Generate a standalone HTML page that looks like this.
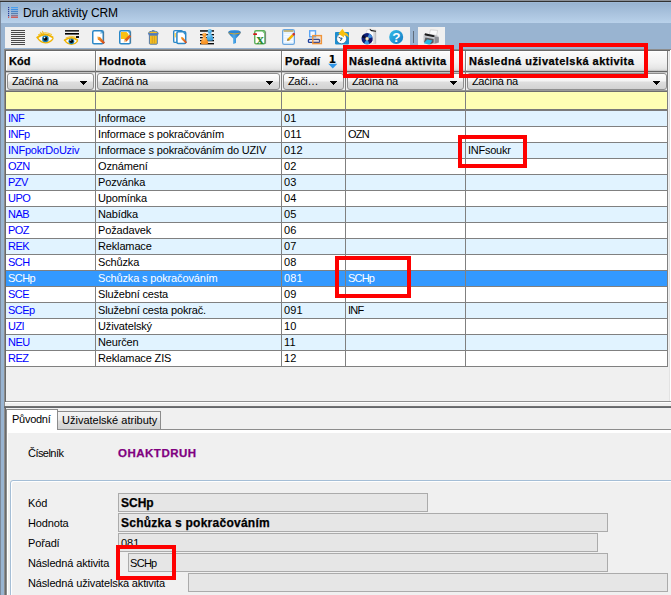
<!DOCTYPE html><html lang="cs"><head><meta charset="utf-8"><title>Druh aktivity CRM</title><style>
*{box-sizing:border-box;margin:0;padding:0}
html,body{width:671px;height:595px;overflow:hidden}
body{position:relative;background:#99b4d1;font-family:"Liberation Sans",sans-serif;font-size:11px;color:#000;line-height:1}
.a{position:absolute}
.t{position:absolute;white-space:pre;line-height:13px;height:13px}
.b{font-weight:bold;letter-spacing:.46px;-webkit-text-stroke:.25px currentColor}
.hdr{position:absolute;top:51px;height:20px;background:linear-gradient(#fbfbfb 0,#f1f1f1 55%,#e6e6e6 85%,#d4d4d4 100%);border-left:1px solid #fff;border-top:1px solid #fff}
.flt{position:absolute;top:73px;height:17px;border:1px solid #8e8e8e;border-radius:3px;background:linear-gradient(#ffffff 0,#f4f4f4 45%,#dedede 55%,#d2d2d2 100%)}
.flt i{position:absolute;right:9px;top:7px;width:1px;height:1px;background:#000;box-shadow:-3px 0 #000,-2px 0 #000,-1px 0 #000,1px 0 #000,2px 0 #000,3px 0 #000,-2px 1px #000,-1px 1px #000,0 1px #000,1px 1px #000,2px 1px #000,-1px 2px #000,0 2px #000,1px 2px #000,0 3px #000}
.vl{position:absolute;width:1px;background:#808080}
.hl{position:absolute;height:1px;background:#808080}
.row{position:absolute;left:6px;width:661px;height:15px}
.c{position:absolute;top:0;height:15px;line-height:15px;padding-left:2px;white-space:pre;overflow:hidden}
.red{position:absolute;border:4px solid #fe0000}
.fld{position:absolute;height:19px;background:#e6e6e6;border:1px solid #ababab}
.lbl{position:absolute;left:28px;white-space:pre;line-height:13px}
svg{position:absolute;overflow:visible}
</style></head><body>
<div class="a" style="left:0;top:0;width:671px;height:1px;background:#8c9097"></div>
<div class="a" style="left:0;top:1px;width:671px;height:1px;background:#323232"></div>
<div class="a" style="left:0;top:2px;width:671px;height:21px;background:linear-gradient(#a3bddb 0,#99b4d1 6%,#b9d1ea 100%)"></div>
<div class="a" style="left:0;top:2px;width:1px;height:593px;background:#7c899b"></div>
<svg style="left:8px;top:7px" width="11" height="11" viewBox="0 0 11 11"><g fill="#2a3f9a"><rect x="0" y="0" width="1.2" height="1.2"/><rect x="0" y="2" width="1.2" height="1.2"/><rect x="0" y="4" width="1.2" height="1.2"/><rect x="0" y="6" width="1.2" height="1.2"/><rect x="0" y="8" width="1.2" height="1.2"/></g><rect x="3" y="0" width="7" height="1.2" fill="#4aa0f0"/><rect x="3" y="2" width="7" height="1.2" fill="#3d8fe6"/><rect x="3" y="4" width="7" height="1.2" fill="#4a86c8"/><rect x="3" y="6" width="7" height="1.2" fill="#5a7fae"/><rect x="3" y="8" width="7" height="1.2" fill="#8a7a96"/><rect x="0" y="9.6" width="1.2" height="1.2" fill="#d2453c"/><rect x="3" y="9.6" width="7" height="1.2" fill="#d2453c"/></svg>
<div class="t" style="left:23px;top:6px;font-size:12px;line-height:14px;height:14px;letter-spacing:-.1px">Druh aktivity CRM</div>
<div class="a" style="left:5px;top:27px;width:405px;height:21px;background:#f0f0f0"></div>
<div class="a" style="left:418px;top:27px;width:27px;height:21px;background:#f0f0f0"></div>
<div class="a" style="left:413px;top:31px;width:1px;height:12px;background:#5f6b7a"></div>
<svg style="left:0;top:24px" width="460" height="26" viewBox="0 24 460 26">
<defs>
<linearGradient id="gp" x1="0" y1="0" x2="1" y2="1"><stop offset="0" stop-color="#f6d070"/><stop offset=".25" stop-color="#f08a20"/><stop offset=".8" stop-color="#d8501a"/><stop offset="1" stop-color="#7a3a2a"/></linearGradient>
<linearGradient id="gh" x1="0" y1="0" x2="1" y2="1"><stop offset="0" stop-color="#35bde8"/><stop offset="1" stop-color="#1479c4"/></linearGradient>
<linearGradient id="gf" x1="0" y1="0" x2="1" y2="0"><stop offset="0" stop-color="#1d6fc0"/><stop offset=".45" stop-color="#4aa8ea"/><stop offset="1" stop-color="#1a62b0"/></linearGradient>
<radialGradient id="gb" cx=".4" cy=".3" r=".8"><stop offset="0" stop-color="#8fd0f4"/><stop offset=".5" stop-color="#4eb0e6"/><stop offset="1" stop-color="#3a9ad8"/></radialGradient>
<radialGradient id="go" cx=".4" cy=".3" r=".8"><stop offset="0" stop-color="#ffc27a"/><stop offset=".5" stop-color="#fb9a2c"/><stop offset="1" stop-color="#f08a1c"/></radialGradient>
</defs>
<!-- 1 list -->
<g fill="#4a4a4a"><rect x="11" y="30" width="14" height="1"/><rect x="11" y="32" width="14" height="1"/><rect x="11" y="34" width="14" height="1"/><rect x="11" y="36" width="14" height="1"/><rect x="11" y="38" width="14" height="1"/><rect x="11" y="40" width="14" height="1"/><rect x="11" y="42" width="14" height="1"/><rect x="11" y="44" width="14" height="1"/></g>
<!-- 2 eye -->
<g fill="none" stroke-linecap="round">
<path d="M39 38.6Q45 34.6 52 38.6Q46 43 39 38.6Z" fill="#fff" stroke="none"/>
<path d="M38.5 34.8Q45 30.8 51.5 34.5" stroke="#f4c63a" stroke-width="1.1"/>
<path d="M37.3 37.4Q44.5 31.8 52.6 37.2" stroke="#f0b400" stroke-width="1.9"/>
<path d="M37.4 37.6Q40 42.4 45.5 42.8Q50.5 42.6 53 38.6" stroke="#f0b400" stroke-width="1.3"/>
<path d="M40.5 32.2L42 34.6M42.5 31.2L43.5 34" stroke="#f0b400" stroke-width=".8"/>
</g>
<circle cx="45.4" cy="38.9" r="3.3" fill="#1d7fae"/><circle cx="45.4" cy="38.8" r="2" fill="#050505"/><circle cx="44.6" cy="37.6" r=".8" fill="#fff"/>
<!-- 3 eye + lines -->
<rect x="65" y="30" width="14" height="1.7" fill="#2a2a2a"/><rect x="65" y="33" width="14" height="1.6" fill="#000"/><rect x="76" y="36" width="3" height="2" fill="#111"/>
<g fill="none" stroke-linecap="round">
<path d="M66 41Q71 37.8 77 41Q72 44.8 66 41Z" fill="#fff" stroke="none"/>
<path d="M66 37.8Q71 35 75.5 37" stroke="#f4c63a" stroke-width="1"/>
<path d="M64.6 40.2Q71 35.6 77.4 40" stroke="#f0b400" stroke-width="1.7"/>
<path d="M64.8 40.4Q67 44 71.5 44.4Q75.5 44.2 77.6 41" stroke="#f0b400" stroke-width="1.2"/>
</g>
<circle cx="71.4" cy="41.3" r="2.9" fill="#1d7fae"/><circle cx="71.4" cy="41.2" r="1.8" fill="#050505"/><circle cx="70.7" cy="40.1" r=".7" fill="#fff"/>
<!-- 4 new doc + pencil -->
<rect x="92.75" y="30.75" width="10.5" height="13.1" rx="1.4" fill="#fff" stroke="#2a88c8" stroke-width="1.5"/>
<path d="M100 31.2h2.8v2.8z" fill="#2e8ecb"/><path d="M100 31.2v2.8h2.8z" fill="#bfe0f4"/>
<rect x="103.4" y="31.5" width=".8" height="12" fill="#6a6a6a" opacity=".6"/>
<path d="M97.2 36.4L100 37L105 42.4L103.4 44.1L97.8 39.2Z" fill="url(#gp)"/>
<!-- 5 yellow doc + pencil -->
<rect x="119.75" y="30.75" width="10.5" height="13.1" rx="1.4" fill="#fff" stroke="#2a88c8" stroke-width="1.5"/>
<path d="M121 32h5.5l2 2v5H121z" fill="#f9c013"/>
<path d="M127.6 31.4h2v2z" fill="#2e8ecb"/>
<rect x="130.4" y="31.5" width=".8" height="12" fill="#6a6a6a" opacity=".6"/>
<path d="M123.8 42.2L124.6 39.4L129.4 34.8L131.2 36.6L126.6 41.4Z" fill="#e0601c"/><path d="M123.8 42.2L124.6 39.4L126.6 41.4Z" fill="#f2d9a0"/>
<!-- 6 trash -->
<path d="M152 30.2h2.4v1.2H152z" fill="#4a74b4"/>
<path d="M148.4 33.6Q148.4 31.2 153.3 31.2Q158.2 31.2 158.2 33.6Z" fill="#f8c020" stroke="#3f6fb0" stroke-width=".9"/>
<rect x="148.4" y="33.6" width="9.8" height="1.6" fill="#5a7ec0"/>
<path d="M149.4 35.2h7.9v8.2q0 .8-.8.8h-6.3q-.8 0-.8-.8z" fill="#f8c020" stroke="#3f6fb0" stroke-width=".9"/>
<rect x="151.6" y="36" width="1.3" height="7.2" fill="#d9a520"/><rect x="153.8" y="36" width="1.3" height="7.2" fill="#d9a520"/>
<!-- 7 copy docs + pencil -->
<rect x="173.7" y="30.6" width="8.8" height="11.8" rx="1.2" fill="#fff" stroke="#2a88c8" stroke-width="1.4"/>
<rect x="174.6" y="33" width="1.2" height="4.4" fill="#f9c83a"/>
<rect x="176.9" y="31.7" width="8.8" height="11.8" rx="1.2" fill="#fff" stroke="#2a88c8" stroke-width="1.5"/>
<path d="M182.6 32.2h2.8v3z" fill="#2e8ecb"/>
<path d="M180.8 36.8L182.9 37.3L187 42.3L185.7 43.6L181.3 38.9Z" fill="url(#gp)"/>
<!-- 8 people over lines -->
<g fill="#0a0a0a"><rect x="200" y="30.2" width="14" height="1.5"/><rect x="200" y="34" width="14" height="1.3"/><rect x="200" y="37" width="14" height="1.3"/><rect x="200" y="40" width="14" height="1.3"/><rect x="200" y="43" width="14" height="1.4"/></g>
<path d="M208.9 32.4Q206.6 36 206.3 39.2Q206.3 40.8 209.8 40.8Q213.3 40.8 213.3 39.2Q213 36 210.7 32.4Z" fill="url(#gb)"/><circle cx="209.8" cy="31.2" r="2.1" fill="url(#gb)"/>
<path d="M203.5 36Q201 39.6 200.7 42.8Q200.7 44.4 204.4 44.4Q208.2 44.4 208.2 42.8Q207.9 39.6 205.3 36Z" fill="url(#go)"/><circle cx="204.4" cy="34.8" r="2.1" fill="url(#go)"/>
<!-- 9 funnel -->
<path d="M228.2 32.2Q228.2 30.2 234.5 30.2Q240.8 30.2 240.8 32.2Q240.8 33.6 236 38.6V43L233.2 44V38.6Q228.2 33.6 228.2 32.2Z" fill="url(#gf)"/>
<ellipse cx="234.5" cy="31.8" rx="5.6" ry="1.2" fill="#2a86d8"/>
<path d="M228.6 33Q234.5 35 240.4 33" fill="none" stroke="#d8a020" stroke-width=".9"/>
<!-- 10 excel -->
<rect x="254.75" y="30.75" width="10.2" height="13.1" rx="1.3" fill="#fff" stroke="#58ae58" stroke-width="1.4"/>
<path d="M262 31.2h2.6v2.8z" fill="#6cc06c"/>
<rect x="265.2" y="31.5" width=".9" height="12.4" fill="#5a5a5a" opacity=".6"/>
<rect x="253.2" y="33.2" width="3.8" height="1.7" rx=".5" fill="#d01818"/>
<text x="260.2" y="43.6" font-family="Liberation Serif, serif" font-weight="bold" font-size="14.5" fill="#2e8b2e" text-anchor="middle">x</text>
<!-- 11 notepad -->
<rect x="282.6" y="29.6" width="11.8" height="14.8" rx="1.6" fill="#e6f3ff" stroke="#6aa6de" stroke-width="1.2"/>
<rect x="283.6" y="30.2" width="9.8" height="1.6" fill="#b8a860"/>
<g fill="#fff"><rect x="284" y="34" width="9" height=".8"/><rect x="284" y="36.4" width="9" height=".8"/><rect x="284" y="38.8" width="9" height=".8"/><rect x="284" y="41.2" width="9" height=".8"/></g>
<path d="M287 40.8L287.8 38.4L292 34.2L293.8 36L289.6 40.2Z" fill="#f5b400"/><path d="M287 40.8L287.8 38.4L289.6 40.2Z" fill="#8a6a4a"/><path d="M292 34.2L292.9 33.3a1.2 1.2 0 0 1 1.8 1.8L293.8 36Z" fill="#c83030"/>
<!-- 12 squares -->
<rect x="309.7" y="30.8" width="5.8" height="6" fill="#f6f9ff" stroke="#5aa5f5" stroke-width="1.4"/>
<rect x="308.4" y="39.4" width="11.2" height="3" rx="1" fill="#e8eefc" stroke="#1f3f9a" stroke-width="1.3"/>
<rect x="312.8" y="35.6" width="8.6" height="8" fill="#f0943a" fill-opacity=".15" stroke="#f0943a" stroke-width="1.4"/>
<!-- 13 clock + arrow -->
<rect x="335" y="32" width="14" height="12.4" rx=".8" fill="#1e8fd0"/>
<circle cx="341.6" cy="38.7" r="5" fill="#fff" stroke="#0e5a90" stroke-width=".6"/>
<path d="M341.6 38.7L338.6 37.2M341.6 38.7L340.4 41" stroke="#222" stroke-width=".8" fill="none"/>
<circle cx="341.6" cy="38.5" r=".9" fill="#1a6aa8"/>
<path d="M342.5 28.8L344.6 32.2Q348.4 33 348.8 37.6Q346.4 35 343.8 35.4L344.2 37.4L338.4 33.8Z" fill="#f8c010"/>
<!-- 14 cd + box -->
<path d="M366.5 30.4L369.6 28.9L376 30.2V43.6H368z" fill="#fafafa" stroke="#c8c8c8" stroke-width=".5"/>
<rect x="373.6" y="31.4" width="2.4" height="12.2" fill="#b8b8b8"/><rect x="374.4" y="31.4" width=".8" height="12.2" fill="#e8e8e8"/>
<path d="M369.8 29.4L371.6 30.6L376 31.2" stroke="#111" stroke-width="1.1" fill="none"/>
<circle cx="367.1" cy="38.7" r="5.6" fill="#0c1f78"/>
<path d="M367.1 38.7L369.2 33.5A5.6 5.6 0 0 1 372.5 37.2Z" fill="#3f8fe0"/><path d="M367.1 38.7L364 43.4A5.6 5.6 0 0 0 369.4 43.8Z" fill="#3a9ae4"/><path d="M367.1 38.7L361.6 37.6A5.6 5.6 0 0 1 363.4 34.5Z" fill="#050a30"/><path d="M367.1 38.7L372.6 39.8A5.6 5.6 0 0 1 370.8 43Z" fill="#1a1060"/>
<circle cx="367.1" cy="38.7" r="1.6" fill="#f4ecd0" stroke="#c8a850" stroke-width=".4"/>
<!-- 15 help -->
<circle cx="396.2" cy="37" r="7" fill="url(#gh)"/>
<text x="396.3" y="42" font-family="Liberation Sans, sans-serif" font-weight="bold" font-size="13.5" fill="#fff" text-anchor="middle">?</text>
<!-- 16 printer -->
<path d="M430.4 29.8L437.6 30.4L436.6 35.4L429.4 34.6Z" fill="#fafafa" stroke="#b8b8b8" stroke-width=".5"/>
<path d="M423.4 36.4Q423.2 34 425.4 33.4L436.8 35.2Q439 35.8 439 38V41.4Q438.8 43 436.8 43.4L431 44.4L423.6 42.2Z" fill="#c4c6ca"/>
<path d="M434.6 36.4L438.8 37.2V42.4L434.6 43.6Z" fill="#8e9096"/>
<path d="M424.6 34.2Q424.8 33.2 426.2 33.4L434 35.2Q435 35.6 434.6 36.6Q434.2 37.2 433 37L425.4 35.4Q424.4 35.2 424.6 34.2Z" fill="#1c1c1c"/>
<path d="M425.4 37.4L433.6 39V42.6L430.6 44.2L424 42.2Z" fill="#5a5c60"/>
<path d="M427.2 39.4L432.4 40.6L429.6 44.8L423.8 43.2Z" fill="#29b8e6"/>
</svg>

<div class="a" style="left:4px;top:49px;width:667px;height:353px;background:#f0f0f0;border-left:1px solid #8c8c8c;border-top:1px solid #8c8c8c"></div>
<div class="a" style="left:5px;top:50px;width:666px;height:1px;background:#696969"></div>
<div class="a" style="left:5px;top:50px;width:1px;height:545px;background:#696969"></div>
<div class="a" style="left:4px;top:402px;width:1px;height:193px;background:#8c8c8c"></div>
<div class="a" style="left:669px;top:51px;width:1px;height:350px;background:#e3e3e3"></div>
<div class="a" style="left:670px;top:50px;width:1px;height:352px;background:#fff"></div>
<div class="a" style="left:6px;top:401px;width:665px;height:1px;background:#8f8f8f"></div>
<div class="hdr" style="left:6px;width:89px"><span class="t b" style="left:2px;top:3px;letter-spacing:.06px">Kód</span></div>
<div class="hdr" style="left:96px;width:185px"><span class="t b" style="left:2px;top:3px;letter-spacing:.35px">Hodnota</span></div>
<div class="hdr" style="left:282px;width:63px"><span class="t b" style="left:2px;top:3px;letter-spacing:.18px">Pořadí</span></div>
<div class="hdr" style="left:346px;width:119px"><span class="t b" style="left:2px;top:3px;letter-spacing:.46px">Následná aktivita</span></div>
<div class="hdr" style="left:466px;width:201px"><span class="t b" style="left:2px;top:3px;letter-spacing:.47px">Následná uživatelská aktivita</span></div>
<div class="t" style="left:328.5px;top:53px;font-family:'DejaVu Sans',sans-serif;font-weight:bold;font-size:11px;line-height:13px">1</div>
<svg style="left:328px;top:63px" width="10" height="6" viewBox="0 0 10 6"><path d="M0.2 .7H9.4L4.8 5.6Z" fill="#2f96e8"/></svg>
<div class="flt" style="left:7px;width:87px"><span class="t" style="left:4px;top:1px;letter-spacing:-.35px">Začíná na</span><i></i></div>
<div class="flt" style="left:97px;width:183px"><span class="t" style="left:4px;top:1px;letter-spacing:-.35px">Začíná na</span><i></i></div>
<div class="flt" style="left:283px;width:61px"><span class="t" style="left:4px;top:1px;letter-spacing:-.35px">Zači…</span><i></i></div>
<div class="flt" style="left:347px;width:117px"><span class="t" style="left:4px;top:1px;letter-spacing:-.35px">Začíná na</span><i></i></div>
<div class="flt" style="left:467px;width:200px"><span class="t" style="left:4px;top:1px;letter-spacing:-.35px">Začíná na</span><i></i></div>
<div class="a" style="left:6px;top:92px;width:661px;height:17px;background:#ffffb4"></div>
<div class="row" style="top:111px;background:#e1f3ff">
<span class="c" style="left:0px;width:89px;color:#0000ff;letter-spacing:-.55px">INF</span>
<span class="c" style="left:90px;width:185px;color:#000;letter-spacing:-.15px">Informace</span>
<span class="c" style="left:276px;width:63px;color:#000;letter-spacing:.1px">01</span>
</div>
<div class="row" style="top:127px;background:#fff">
<span class="c" style="left:0px;width:89px;color:#0000ff;letter-spacing:-.55px">INFp</span>
<span class="c" style="left:90px;width:185px;color:#000;letter-spacing:-.15px">Informace s pokračováním</span>
<span class="c" style="left:276px;width:63px;color:#000;letter-spacing:.1px">011</span>
<span class="c" style="left:340px;width:119px;color:#000;letter-spacing:-.8px">OZN</span>
</div>
<div class="row" style="top:143px;background:#e1f3ff">
<span class="c" style="left:0px;width:89px;color:#0000ff;letter-spacing:-.25px">INFpokrDoUziv</span>
<span class="c" style="left:90px;width:185px;color:#000;letter-spacing:-.15px">Informace s pokračováním do UZIV</span>
<span class="c" style="left:276px;width:63px;color:#000;letter-spacing:.1px">012</span>
<span class="c" style="left:460px;width:201px;color:#000;letter-spacing:-.25px">INFsoukr</span>
</div>
<div class="row" style="top:159px;background:#fff">
<span class="c" style="left:0px;width:89px;color:#0000ff;letter-spacing:-.55px">OZN</span>
<span class="c" style="left:90px;width:185px;color:#000;letter-spacing:-.15px">Oznámení</span>
<span class="c" style="left:276px;width:63px;color:#000;letter-spacing:.1px">02</span>
</div>
<div class="row" style="top:175px;background:#e1f3ff">
<span class="c" style="left:0px;width:89px;color:#0000ff;letter-spacing:-.55px">PZV</span>
<span class="c" style="left:90px;width:185px;color:#000;letter-spacing:-.15px">Pozvánka</span>
<span class="c" style="left:276px;width:63px;color:#000;letter-spacing:.1px">03</span>
</div>
<div class="row" style="top:191px;background:#fff">
<span class="c" style="left:0px;width:89px;color:#0000ff;letter-spacing:-.55px">UPO</span>
<span class="c" style="left:90px;width:185px;color:#000;letter-spacing:-.15px">Upomínka</span>
<span class="c" style="left:276px;width:63px;color:#000;letter-spacing:.1px">04</span>
</div>
<div class="row" style="top:207px;background:#e1f3ff">
<span class="c" style="left:0px;width:89px;color:#0000ff;letter-spacing:-.55px">NAB</span>
<span class="c" style="left:90px;width:185px;color:#000;letter-spacing:-.15px">Nabídka</span>
<span class="c" style="left:276px;width:63px;color:#000;letter-spacing:.1px">05</span>
</div>
<div class="row" style="top:223px;background:#fff">
<span class="c" style="left:0px;width:89px;color:#0000ff;letter-spacing:-.55px">POZ</span>
<span class="c" style="left:90px;width:185px;color:#000;letter-spacing:-.15px">Požadavek</span>
<span class="c" style="left:276px;width:63px;color:#000;letter-spacing:.1px">06</span>
</div>
<div class="row" style="top:239px;background:#e1f3ff">
<span class="c" style="left:0px;width:89px;color:#0000ff;letter-spacing:-.55px">REK</span>
<span class="c" style="left:90px;width:185px;color:#000;letter-spacing:-.15px">Reklamace</span>
<span class="c" style="left:276px;width:63px;color:#000;letter-spacing:.1px">07</span>
</div>
<div class="row" style="top:255px;background:#fff">
<span class="c" style="left:0px;width:89px;color:#0000ff;letter-spacing:-.55px">SCH</span>
<span class="c" style="left:90px;width:185px;color:#000;letter-spacing:-.15px">Schůzka</span>
<span class="c" style="left:276px;width:63px;color:#000;letter-spacing:.1px">08</span>
</div>
<div class="row" style="top:271px;background:#3399ff">
<span class="c" style="left:0px;width:89px;color:#fff;letter-spacing:-.55px">SCHp</span>
<span class="c" style="left:90px;width:185px;color:#fff;letter-spacing:-.15px">Schůzka s pokračováním</span>
<span class="c" style="left:276px;width:63px;color:#fff;letter-spacing:.1px">081</span>
<span class="c" style="left:340px;width:119px;color:#fff;letter-spacing:-.8px">SCHp</span>
</div>
<div class="row" style="top:287px;background:#fff">
<span class="c" style="left:0px;width:89px;color:#0000ff;letter-spacing:-.55px">SCE</span>
<span class="c" style="left:90px;width:185px;color:#000;letter-spacing:-.15px">Služební cesta</span>
<span class="c" style="left:276px;width:63px;color:#000;letter-spacing:.1px">09</span>
</div>
<div class="row" style="top:303px;background:#e1f3ff">
<span class="c" style="left:0px;width:89px;color:#0000ff;letter-spacing:-.55px">SCEp</span>
<span class="c" style="left:90px;width:185px;color:#000;letter-spacing:-.15px">Služební cesta pokrač.</span>
<span class="c" style="left:276px;width:63px;color:#000;letter-spacing:.1px">091</span>
<span class="c" style="left:340px;width:119px;color:#000;letter-spacing:-.8px">INF</span>
</div>
<div class="row" style="top:319px;background:#fff">
<span class="c" style="left:0px;width:89px;color:#0000ff;letter-spacing:-.55px">UZI</span>
<span class="c" style="left:90px;width:185px;color:#000;letter-spacing:-.15px">Uživatelský</span>
<span class="c" style="left:276px;width:63px;color:#000;letter-spacing:.1px">10</span>
</div>
<div class="row" style="top:335px;background:#e1f3ff">
<span class="c" style="left:0px;width:89px;color:#0000ff;letter-spacing:-.55px">NEU</span>
<span class="c" style="left:90px;width:185px;color:#000;letter-spacing:-.15px">Neurčen</span>
<span class="c" style="left:276px;width:63px;color:#000;letter-spacing:.1px">11</span>
</div>
<div class="row" style="top:351px;background:#fff">
<span class="c" style="left:0px;width:89px;color:#0000ff;letter-spacing:-.55px">REZ</span>
<span class="c" style="left:90px;width:185px;color:#000;letter-spacing:-.15px">Reklamace ZIS</span>
<span class="c" style="left:276px;width:63px;color:#000;letter-spacing:.1px">12</span>
</div>
<div class="hl" style="left:6px;top:70px;width:662px;background:#c8c8c8"></div>
<div class="hl" style="left:6px;top:71px;width:662px;background:#666"></div>
<div class="hl" style="left:6px;top:72px;width:662px;background:#c4c4c4"></div>
<div class="hl" style="left:6px;top:90px;width:662px;background:#9a9a9a"></div>
<div class="hl" style="left:6px;top:91px;width:662px;background:#6e6e6e"></div>
<div class="hl" style="left:6px;top:109px;width:662px;height:2px;background:#7a7a7a"></div>
<div class="hl" style="left:6px;top:126px;width:662px"></div>
<div class="hl" style="left:6px;top:142px;width:662px"></div>
<div class="hl" style="left:6px;top:158px;width:662px"></div>
<div class="hl" style="left:6px;top:174px;width:662px"></div>
<div class="hl" style="left:6px;top:190px;width:662px"></div>
<div class="hl" style="left:6px;top:206px;width:662px"></div>
<div class="hl" style="left:6px;top:222px;width:662px"></div>
<div class="hl" style="left:6px;top:238px;width:662px"></div>
<div class="hl" style="left:6px;top:254px;width:662px"></div>
<div class="hl" style="left:6px;top:270px;width:662px"></div>
<div class="hl" style="left:6px;top:286px;width:662px"></div>
<div class="hl" style="left:6px;top:302px;width:662px"></div>
<div class="hl" style="left:6px;top:318px;width:662px"></div>
<div class="hl" style="left:6px;top:334px;width:662px"></div>
<div class="hl" style="left:6px;top:350px;width:662px"></div>
<div class="hl" style="left:6px;top:366px;width:662px"></div>
<div class="vl" style="left:95px;top:51px;height:316px"></div>
<div class="vl" style="left:281px;top:51px;height:316px"></div>
<div class="vl" style="left:345px;top:51px;height:316px"></div>
<div class="vl" style="left:465px;top:51px;height:316px"></div>
<div class="vl" style="left:667px;top:51px;height:316px"></div>
<div class="a" style="left:95px;top:271px;width:1px;height:15px;background:#3399ff"></div>
<div class="a" style="left:5px;top:402px;width:666px;height:4px;background:#f0f0f0;border-top:1px solid #fff"></div>
<div class="a" style="left:4px;top:406px;width:667px;height:2px;background:#64676b;border-top:1px solid #727272"></div>
<div class="a" style="left:6px;top:408px;width:665px;height:187px;background:#f0f0f0"></div>
<div class="a" style="left:6px;top:429px;width:665px;height:166px;background:#fff;border-top:1px solid #8c8c8c;border-left:1px solid #8c8c8c"></div>
<div class="a" style="left:8px;top:433px;width:663px;height:162px;background:#f0f0f0"></div>
<div class="a" style="left:6px;top:409px;width:52px;height:21px;background:#fff;border:1px solid #8c8c8c;border-bottom:0"><span class="t" style="left:5px;top:3px;letter-spacing:-.27px">Původní</span></div>
<div class="a" style="left:57px;top:411px;width:104px;height:19px;background:linear-gradient(#f4f4f4 0,#ebebeb 45%,#dcdcdc 55%,#d2d2d2 100%);border:1px solid #8c8c8c"><span class="t" style="left:4px;top:2px">Uživatelské atributy</span></div>
<div class="lbl" style="top:447px;letter-spacing:-.55px">Číselník</div>
<div class="lbl b" style="left:118px;top:447px;color:#800080;letter-spacing:.5px;font-size:11.5px">OHAKTDRUH</div>
<div class="a" style="left:10px;top:480px;width:670px;height:130px;border:1px solid #a5bed6;border-radius:3px;box-shadow:inset 1px 1px 0 #fff"></div>
<div class="lbl" style="top:497px;letter-spacing:-.15px">Kód</div>
<div class="lbl" style="top:517px;letter-spacing:-.15px">Hodnota</div>
<div class="lbl" style="top:537px;letter-spacing:-.15px">Pořadí</div>
<div class="lbl" style="top:557px;letter-spacing:-.15px">Následná aktivita</div>
<div class="lbl" style="top:577px;letter-spacing:-.15px">Následná uživatelská aktivita</div>
<div class="fld" style="left:118px;top:493px;width:310px"><span class="t" style="left:2px;top:2px;-webkit-text-stroke:.25px #000;font-weight:bold;font-size:12px;line-height:15px;height:15px;letter-spacing:0">SCHp</span></div>
<div class="fld" style="left:118px;top:513px;width:490px"><span class="t" style="left:2px;top:2px;-webkit-text-stroke:.25px #000;font-weight:bold;font-size:12px;line-height:15px;height:15px;letter-spacing:.25px">Schůzka s pokračováním</span></div>
<div class="fld" style="left:118px;top:533px;width:480px"><span class="t" style="left:2px;top:3px;letter-spacing:0">081</span></div>
<div class="fld" style="left:128px;top:553px;width:480px"><span class="t" style="left:1px;top:3px;letter-spacing:-.7px">SCHp</span></div>
<div class="fld" style="left:188px;top:573px;width:480px"></div>
<div class="red" style="left:343px;top:45px;width:111px;height:33px"></div>
<div class="red" style="left:459px;top:43px;width:189px;height:35px"></div>
<div class="red" style="left:458px;top:135px;width:69px;height:33px"></div>
<div class="red" style="left:335px;top:256px;width:76px;height:42px"></div>
<div class="red" style="left:116px;top:545px;width:60px;height:35px"></div>
</body></html>
